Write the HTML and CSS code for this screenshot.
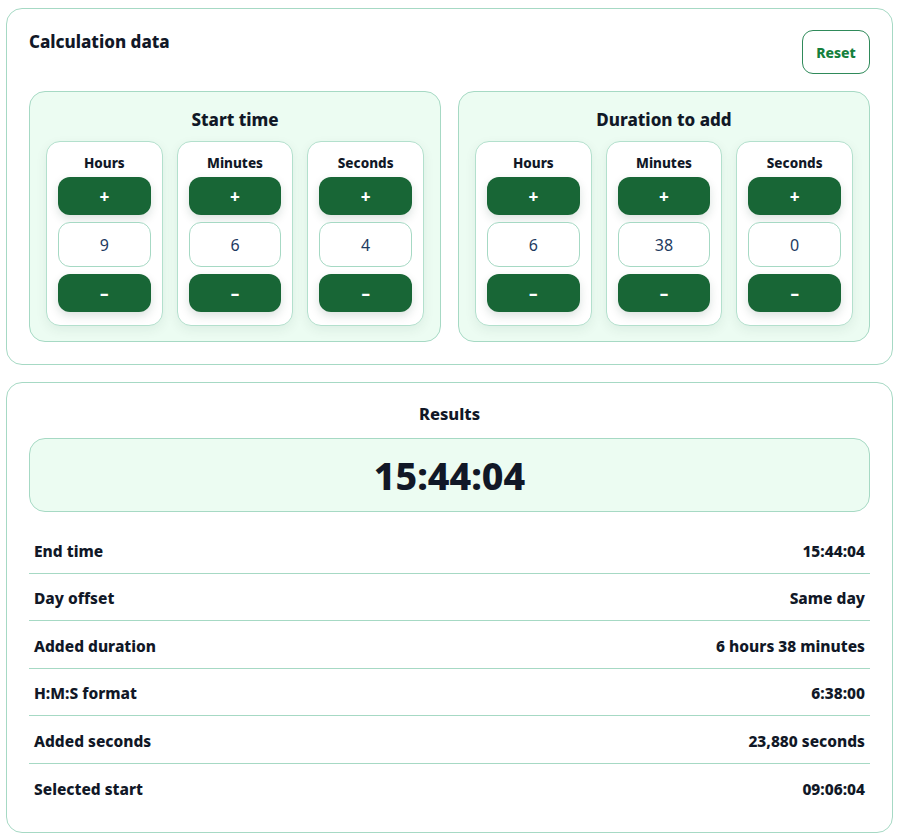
FILE: index.html
```html
<!DOCTYPE html>
<html lang="en">
<head>
<meta charset="utf-8">
<title>Time calculator</title>
<link rel="stylesheet" href="styles.css">
</head>
<body>
<main class="page">
  <section class="card">
    <div class="card-head">
      <h2 class="card-title">Calculation data</h2>
      <button class="reset">Reset</button>
    </div>
    <div class="panels">
      <div class="panel">
        <h3 class="panel-title">Start time</h3>
        <div class="cols">
          <div class="col">
            <div class="col-label">Hours</div>
            <button class="step">+</button>
            <div class="value">9</div>
            <button class="step">–</button>
          </div>
          <div class="col">
            <div class="col-label">Minutes</div>
            <button class="step">+</button>
            <div class="value">6</div>
            <button class="step">–</button>
          </div>
          <div class="col">
            <div class="col-label">Seconds</div>
            <button class="step">+</button>
            <div class="value">4</div>
            <button class="step">–</button>
          </div>
        </div>
      </div>
      <div class="panel">
        <h3 class="panel-title">Duration to add</h3>
        <div class="cols">
          <div class="col">
            <div class="col-label">Hours</div>
            <button class="step">+</button>
            <div class="value">6</div>
            <button class="step">–</button>
          </div>
          <div class="col">
            <div class="col-label">Minutes</div>
            <button class="step">+</button>
            <div class="value">38</div>
            <button class="step">–</button>
          </div>
          <div class="col">
            <div class="col-label">Seconds</div>
            <button class="step">+</button>
            <div class="value">0</div>
            <button class="step">–</button>
          </div>
        </div>
      </div>
    </div>
  </section>

  <section class="card results">
    <h2 class="results-title">Results</h2>
    <div class="big">15:44:04</div>
    <div class="rows">
      <div class="row"><span>End time</span><span>15:44:04</span></div>
      <div class="row"><span>Day offset</span><span>Same day</span></div>
      <div class="row"><span>Added duration</span><span>6 hours 38 minutes</span></div>
      <div class="row"><span>H:M:S format</span><span>6:38:00</span></div>
      <div class="row"><span>Added seconds</span><span>23,880 seconds</span></div>
      <div class="row"><span>Selected start</span><span>09:06:04</span></div>
    </div>
  </section>
</main>
</body>
</html>
```

FILE: styles.css
```css
* { box-sizing: border-box; }

body {
  margin: 0;
  background: #ffffff;
  font-family: "Noto Sans", "Open Sans", sans-serif;
  color: #111827;
}

.page {
  padding: 8px 7px 8px 6px;
  display: flex;
  flex-direction: column;
  gap: 17px;
}

.card {
  border: 1px solid #a6d9c4;
  border-radius: 16px;
  background: #ffffff;
  padding: 21px 22px 22px;
}

.card-head {
  display: flex;
  justify-content: space-between;
  align-items: flex-start;
  margin-bottom: 17px;
}

.card-title {
  margin: 0;
  font-size: 17px;
  font-weight: 800;
  line-height: 24px;
}

.reset {
  font-family: inherit;
  width: 68px;
  height: 44px;
  border: 1.5px solid #2f8a5a;
  border-radius: 11px;
  background: #ffffff;
  color: #15803d;
  font-size: 14px;
  font-weight: 800;
  cursor: pointer;
}

.panels {
  display: grid;
  grid-template-columns: 1fr 1fr;
  gap: 17px;
}

.panel {
  background: #ecfcf2;
  border: 1px solid #a6d9c4;
  border-radius: 16px;
  padding: 16px 16px 15px;
}

.panel-title {
  margin: 0 0 9px;
  text-align: center;
  font-size: 17px;
  font-weight: 800;
  line-height: 24px;
}

.cols {
  display: grid;
  grid-template-columns: repeat(3, 1fr);
  gap: 14px;
}

.col {
  background: #ffffff;
  border: 1px solid #b3e0cd;
  border-radius: 14px;
  padding: 13px 11px 13px;
  display: flex;
  flex-direction: column;
  gap: 7px;
  box-shadow: 0 4px 12px rgba(16, 60, 40, 0.07);
}

.col-label {
  text-align: center;
  font-size: 13.5px;
  font-weight: 800;
  line-height: 16px;
  margin-bottom: -1px;
}

.step {
  font-family: inherit;
  height: 38px;
  border: none;
  border-radius: 12px;
  background: #186636;
  color: #ffffff;
  font-size: 17px;
  font-weight: 800;
  line-height: 1;
  box-shadow: 0 4px 10px rgba(16, 60, 40, 0.15);
  cursor: pointer;
}

.value {
  height: 45px;
  border: 1px solid #a6d9c4;
  border-radius: 12px;
  background: #ffffff;
  display: flex;
  align-items: center;
  justify-content: center;
  font-size: 16px;
  color: #1e3a5f;
}

.results {
  padding-top: 19px;
  padding-bottom: 21px;
}

.results-title {
  margin: 0 0 12px;
  text-align: center;
  font-size: 16.5px;
  font-weight: 800;
  line-height: 24px;
}

.big {
  background: #ecfcf2;
  border: 1px solid #a6d9c4;
  border-radius: 16px;
  height: 74px;
  display: flex;
  align-items: center;
  justify-content: center;
  font-size: 37.5px;
  font-weight: 800;
}

.rows {
  margin-top: 14px;
}

.row {
  display: flex;
  justify-content: space-between;
  align-items: center;
  height: 47.5px;
  padding: 3px 5px 0;
  border-bottom: 1px solid #a6d9c4;
  font-size: 15.5px;
  font-weight: 800;
}

.row:last-child {
  border-bottom: none;
}
```
